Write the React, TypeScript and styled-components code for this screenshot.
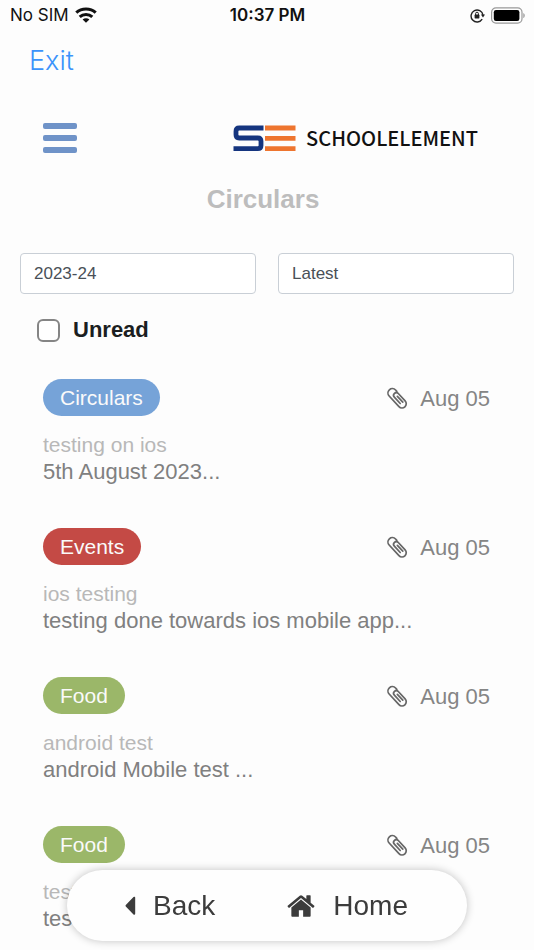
import React from "react";
import styled, { createGlobalStyle } from "styled-components";

const GlobalStyle = createGlobalStyle`
  *, *::before, *::after { box-sizing: border-box; }
  body {
    margin: 0;
    background: #fdfdfd;
    font-family: "Liberation Sans", Arial, sans-serif;
    color: #777;
  }
  button, input, select { font: inherit; color: inherit; }
`;

const Screen = styled.div`
  display: flex;
  flex-direction: column;
`;

const StatusBar = styled.div`
  display: grid;
  grid-template-columns: 1fr auto 1fr;
  align-items: center;
  height: 30px;
  padding: 0 9px 0 10px;
  font-family: Inter, "Liberation Sans", sans-serif;
  font-size: 17px;
  color: #111;
`;

const StatusGroup = styled.div<{ $end?: boolean }>`
  display: flex;
  align-items: center;
  gap: 6px;
  justify-content: ${(p) => (p.$end ? "flex-end" : "flex-start")};
`;

const Clock = styled.time`
  font-weight: 600;
`;

const ExitBar = styled.div`
  display: flex;
  align-items: center;
  height: 62px;
  padding: 0 29px;
`;

const ExitLink = styled.a`
  font-family: Inter, "Liberation Sans", sans-serif;
  font-size: 27px;
  font-weight: 300;
  line-height: 32px;
  color: #3b93fb;
  text-decoration: none;
`;

const Header = styled.header`
  display: flex;
  align-items: center;
  justify-content: space-between;
  height: 60px;
  margin-top: 16px;
  padding: 0 56px 0 43px;
`;

const MenuButton = styled.button`
  display: flex;
  flex-direction: column;
  gap: 6px;
  width: 34px;
  padding: 0;
  border: 0;
  background: none;
`;

const MenuLine = styled.span`
  height: 6px;
  border-radius: 2px;
  background: #6f93c8;
`;

const Brand = styled.div`
  display: flex;
  align-items: center;
  gap: 10px;
  font-family: "Noto Sans CJK SC", "Noto Sans", sans-serif;
  font-size: 20px;
  font-weight: 500;
  line-height: 28px;
  color: #111;
`;

const Title = styled.h1`
  margin: 15px 0 0;
  padding-right: 8px;
  font-size: 26px;
  line-height: 32px;
  text-align: center;
  color: #bdbdbd;
`;

const Filters = styled.form`
  display: grid;
  grid-template-columns: 1fr 1fr;
  gap: 22px;
  padding: 38px 20px 0;
`;

const Select = styled.select`
  appearance: none;
  width: 100%;
  height: 41px;
  padding: 0 13px;
  border: 1px solid #c9cfd6;
  border-radius: 4px;
  background: #fff;
  font-size: 17px;
  color: #495057;
`;

const UnreadLabel = styled.label`
  display: flex;
  grid-column: 1 / -1;
  align-items: center;
  justify-self: start;
  gap: 13px;
  padding-left: 17px;
  font-size: 22px;
  font-weight: 700;
  line-height: 28px;
  color: #1b1e21;
`;

const Checkbox = styled.input`
  appearance: none;
  width: 23px;
  height: 23px;
  margin: 0;
  border: 2px solid #858585;
  border-radius: 6px;
  background: #fff;
  &:checked { background: #6f93c8; }
`;

const List = styled.ul`
  display: flex;
  flex-direction: column;
  gap: 43px;
  margin: 0;
  padding: 35px 44px 16px 43px;
  list-style: none;
`;

const ItemTop = styled.div`
  display: flex;
  align-items: center;
  justify-content: space-between;
`;

const Badge = styled.span<{ $color: string }>`
  padding: 0 17px;
  border-radius: 19px;
  background: ${(p) => p.$color};
  font-size: 21px;
  line-height: 37px;
  color: #fafafa;
`;

const Meta = styled.div`
  display: flex;
  align-items: center;
  gap: 12px;
  padding-top: 2px;
  font-size: 22px;
  line-height: 28px;
  color: #858585;
`;

const Subject = styled.h2`
  margin: 15px 0 0;
  font-size: 21px;
  font-weight: 400;
  line-height: 27px;
  color: #b8b8b8;
`;

const Preview = styled.p`
  margin: 0;
  font-size: 22px;
  line-height: 27px;
  color: #808080;
`;

const BottomNav = styled.nav`
  position: fixed;
  left: 67px;
  right: 67px;
  bottom: 9px;
  display: flex;
  align-items: center;
  justify-content: space-between;
  height: 71px;
  padding: 0 59px 0 58px;
  border-radius: 36px;
  background: #fefefe;
  box-shadow: 0 0 8px rgba(0, 0, 0, 0.24);
`;

const NavButton = styled.button`
  display: flex;
  align-items: center;
  gap: 17px;
  padding: 0;
  border: 0;
  background: none;
  font-size: 28px;
  line-height: 34px;
  color: #3c3c3c;
`;

const WifiIcon = () => (
  <svg width="22" height="16" viewBox="0 0 22 16" fill="none" stroke="#111" strokeWidth="3.1" aria-hidden="true">
    <path d="M1.3 5.6C6.6.7 15.4.7 20.7 5.6" />
    <path d="M4.7 9.8c3.5-3.1 9.1-3.1 12.6 0" />
    <path d="M11 15.8 7.6 12.6c1.9-1.7 4.9-1.7 6.8 0Z" fill="#111" stroke="none" />
  </svg>
);

const RotationLockIcon = () => (
  <svg width="15" height="15" viewBox="0 0 15 15" fill="none" stroke="#222" aria-hidden="true">
    <path d="M12.2 11.2A6 6 0 1 1 13 7" strokeWidth="1.4" />
    <path d="M10.9 6.6h4.1l-2 2.8Z" fill="#222" stroke="none" />
    <rect x="4.6" y="6.6" width="4.8" height="3.8" rx=".6" fill="#222" stroke="none" />
    <path d="M5.6 7V5.6a1.4 1.4 0 0 1 2.8 0V7" strokeWidth="1" />
  </svg>
);

const BatteryIcon = () => (
  <svg width="34" height="17" viewBox="0 0 34 17" aria-hidden="true">
    <rect x=".6" y=".8" width="30.4" height="15.4" rx="4.4" fill="none" stroke="#999" strokeWidth="1.2" />
    <rect x="2.8" y="3" width="25.6" height="11" rx="2.2" fill="#000" />
    <path d="M32.3 5.9c1.9.7 1.9 4.5 0 5.2Z" fill="#999" />
  </svg>
);

const LogoMark = () => (
  <svg width="63" height="27" viewBox="0 0 63 27" fill="none" aria-hidden="true">
    <path
      d="M30.5 3H6.2Q3 3 3 6.2V9.8Q3 13 6.2 13H24.8Q28 13 28 16.2V20.5Q28 23.7 24.8 23.7H.5"
      stroke="#15357f"
      strokeWidth="4.8"
    />
    <path d="M32 3H62.5M32 13.3H62.5M32 23.7H62.5" stroke="#ee752f" strokeWidth="4.8" />
  </svg>
);

const ClipIcon = () => (
  <svg width="22" height="24" viewBox="0 0 22 24" fill="none" stroke="#666" strokeWidth="1.7" strokeLinecap="round" aria-hidden="true">
    <g transform="translate(11 11) rotate(-43)">
      <path d="M4.4-5V-6.8a4.4 4.4 0 0 0-8.8 0V7.6a4.2 4.2 0 0 0 8.4 0V-2.4a2.7 2.7 0 0 0-5.4 0V6.2" />
      <path d="M1.4-1V7" />
    </g>
  </svg>
);

const BackIcon = () => (
  <svg width="11" height="20" viewBox="0 0 11 20" aria-hidden="true">
    <path d="M10.2 1.6v16.2a1 1 0 0 1-1.7.7L.8 10.5a1.1 1.1 0 0 1 0-1.5L8.5 1a1 1 0 0 1 1.7.6Z" fill="#3c3c3c" />
  </svg>
);

const HomeIcon = () => (
  <svg width="30" height="30" viewBox="0 0 1792 1792" fill="#3c3c3c" aria-hidden="true">
    <path d="M1472 992v480q0 26-19 45t-45 19h-384v-384h-256v384h-384q-26 0-45-19t-19-45v-480q0-1 .5-3t.5-3l575-474 575 474q1 2 1 6zm223-69l-62 74q-8 9-21 11h-3q-13 0-21-7l-692-577-692 577q-12 8-24 7-13-2-21-11l-62-74q-8-10-7-23.5t11-21.5l719-599q32-26 76-26t76 26l244 204v-195q0-14 9-23t23-9h192q14 0 23 9t9 23v408l219 182q10 8 11 21.5t-7 23.5z" />
  </svg>
);

const circulars = [
  { type: "Circulars", color: "#76a3d8", date: "Aug 05", subject: "testing on ios", preview: "5th August 2023..." },
  { type: "Events", color: "#c44a45", date: "Aug 05", subject: "ios testing", preview: "testing done towards ios mobile app..." },
  { type: "Food", color: "#9bb769", date: "Aug 05", subject: "android test", preview: "android Mobile test ..." },
  { type: "Food", color: "#9bb769", date: "Aug 05", subject: "test", preview: "test" },
];

export default function App() {
  return (
    <Screen>
      <GlobalStyle />
      <StatusBar>
        <StatusGroup>
          <span>No SIM</span>
          <WifiIcon />
        </StatusGroup>
        <Clock>10:37 PM</Clock>
        <StatusGroup $end>
          <RotationLockIcon />
          <BatteryIcon />
        </StatusGroup>
      </StatusBar>
      <ExitBar>
        <ExitLink href="#exit">Exit</ExitLink>
      </ExitBar>
      <Header>
        <MenuButton type="button" aria-label="Menu">
          <MenuLine />
          <MenuLine />
          <MenuLine />
        </MenuButton>
        <Brand>
          <LogoMark />
          <span>SCHOOLELEMENT</span>
        </Brand>
      </Header>
      <main>
        <Title>Circulars</Title>
        <Filters>
          <Select aria-label="Academic year" defaultValue="2023-24">
            <option>2023-24</option>
          </Select>
          <Select aria-label="Sort order" defaultValue="Latest">
            <option>Latest</option>
          </Select>
          <UnreadLabel>
            <Checkbox type="checkbox" />
            Unread
          </UnreadLabel>
        </Filters>
        <List>
          {circulars.map((item, index) => (
            <li key={index}>
              <ItemTop>
                <Badge $color={item.color}>{item.type}</Badge>
                <Meta>
                  <ClipIcon />
                  <span>{item.date}</span>
                </Meta>
              </ItemTop>
              <Subject>{item.subject}</Subject>
              <Preview>{item.preview}</Preview>
            </li>
          ))}
        </List>
      </main>
      <BottomNav>
        <NavButton type="button">
          <BackIcon />
          Back
        </NavButton>
        <NavButton type="button">
          <HomeIcon />
          Home
        </NavButton>
      </BottomNav>
    </Screen>
  );
}
